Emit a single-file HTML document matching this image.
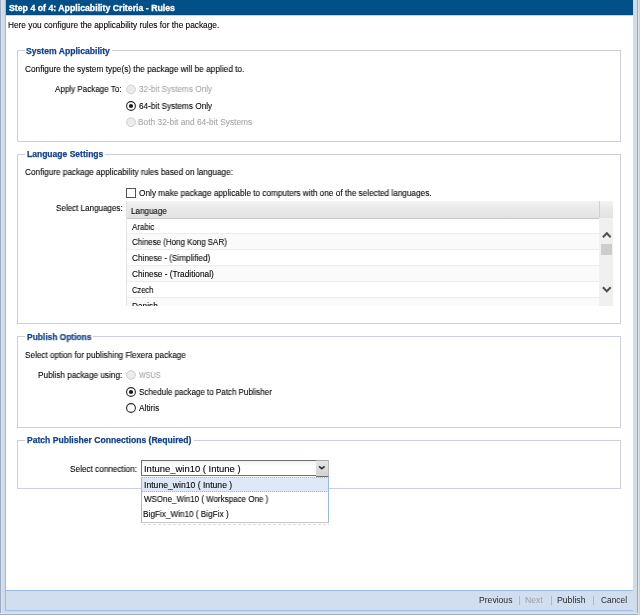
<!DOCTYPE html>
<html><head><meta charset="utf-8">
<style>
html,body{margin:0;padding:0;}
body{width:640px;height:615px;position:relative;overflow:hidden;background:#d0dcea;font-family:"Liberation Sans",sans-serif;color:#000;}
.a{position:absolute;}
.t,.lg,.btn{position:absolute;white-space:nowrap;line-height:10px;will-change:transform;-webkit-text-stroke:0.1px currentColor;}
.t{font-size:8.3px;}
.b{font-weight:bold;}
.lg{font-size:8.5px;font-weight:bold;color:#15428b;-webkit-text-stroke:0.25px #15428b;}
.lgbg{position:absolute;height:6px;background:#fff;}
.fs{position:absolute;border:1px solid #cdcfdb;}
.dis{color:#a8a8a8;}
.radio{position:absolute;width:9px;height:9px;border:1px solid #333;border-radius:50%;background:#fff;box-sizing:content-box;}
.radio.dis{border-color:#c8c8c8;background:#f0f0f0;}
.radio.on::after{content:"";position:absolute;left:2px;top:2px;width:5px;height:5px;border-radius:50%;background:#111;}
.row{position:absolute;left:0;width:473px;height:15px;border-bottom:1px solid #ededed;}
.row.alt{background:#fafafa;}
.btn{font-size:8.2px;color:#2a2a2a;-webkit-text-stroke:0;}
.sep{position:absolute;width:1px;height:9px;background:#c8b58e;top:596px;}
</style></head>
<body>
<div class="a" style="left:0;top:0;width:1px;height:615px;background:#9aabc3"></div>
<div class="a" style="left:1px;top:0;width:1px;height:615px;background:#dde4ee"></div>
<div class="a" style="left:5px;top:0;width:1px;height:611px;background:#99bbe8"></div>
<div class="a" style="left:637px;top:0;width:1px;height:615px;background:#9aabc3"></div>
<div class="a" style="left:638px;top:0;width:1px;height:615px;background:#e0e0e0"></div>
<div class="a" style="left:639px;top:0;width:1px;height:615px;background:#d2d2d2"></div>
<div class="a" style="left:0;top:613px;width:638px;height:1px;background:#dde4ee"></div>
<div class="a" style="left:0;top:614px;width:638px;height:1px;background:#9aabc3"></div>
<div class="a" style="left:6px;top:0;width:627px;height:590px;background:#fff"></div>
<div class="a" style="left:6px;top:0;width:627px;height:14px;background:#025087"></div>
<div class="a" style="left:6px;top:14px;width:627px;height:1px;background:#024a7f"></div>
<div class="a" style="left:6px;top:15px;width:627px;height:1px;background:#c4d6f0"></div>
<div class="t b" id="t1" style="left:9.00px;top:2.5px;font-size:8.75px;color:#fff;-webkit-text-stroke:0.3px #fff;transform:scaleX(1.0000);transform-origin:0 0;">Step 4 of 4: Applicability Criteria - Rules</div>
<div class="t" id="t2" style="left:8.00px;top:20px;transform:scaleX(1.0000);transform-origin:0 0;">Here you configure the applicability rules for the package.</div>
<div class="fs" style="left:17px;top:50px;width:602px;height:90px"></div>
<div class="lgbg" style="left:25px;top:48px;width:87px"></div>
<div class="lg" id="t3" style="left:26.00px;top:46px;transform:scaleX(1.0120);transform-origin:0 0;">System Applicability</div>
<div class="t" id="t4" style="left:25.00px;top:64px;transform:scaleX(0.9989);transform-origin:0 0;">Configure the system type(s) the package will be applied to.</div>
<div class="t" id="t5" style="left:55.00px;top:84px;transform:scaleX(0.9706);transform-origin:0 0;">Apply Package To:</div>
<svg class="a" style="left:125.10px;top:83px" width="12" height="12"><circle cx="6" cy="6.40" r="4.4" fill="#ececec" stroke="#cfcfcf" stroke-width="1"/></svg>
<div class="t dis" id="t6" style="left:139.00px;top:84px;transform:scaleX(0.9836);transform-origin:0 0;">32-bit Systems Only</div>
<svg class="a" style="left:125.10px;top:100px" width="12" height="12"><circle cx="6" cy="6.00" r="4.4" fill="#fff" stroke="#2a2a2a" stroke-width="1.1"/><circle cx="6" cy="6.00" r="2.1" fill="#1a1a1a"/></svg>
<div class="t" id="t7" style="left:139.00px;top:101px;transform:scaleX(0.9836);transform-origin:0 0;">64-bit Systems Only</div>
<svg class="a" style="left:125.10px;top:116px" width="12" height="12"><circle cx="6" cy="6.20" r="4.4" fill="#ececec" stroke="#cfcfcf" stroke-width="1"/></svg>
<div class="t dis" id="t8" style="left:137.98px;top:117px;transform:scaleX(1.0067);transform-origin:0 0;">Both 32-bit and 64-bit Systems</div>
<div class="fs" style="left:17px;top:154px;width:602px;height:168px"></div>
<div class="lgbg" style="left:25px;top:152px;width:80px"></div>
<div class="lg" id="t9" style="left:26.50px;top:149px;transform:scaleX(1.0034);transform-origin:0 0;">Language Settings</div>
<div class="t" id="t10" style="left:25.00px;top:167px;transform:scaleX(0.9881);transform-origin:0 0;">Configure package applicability rules based on language:</div>
<div class="a" style="left:126px;top:188px;width:8px;height:8px;border:1px solid #555;background:#fff"></div>
<div class="t" id="t11" style="left:139.00px;top:188px;transform:scaleX(0.9898);transform-origin:0 0;">Only make package applicable to computers with one of the selected languages.</div>
<div class="t" id="t12" style="left:56.00px;top:203px;transform:scaleX(0.9704);transform-origin:0 0;">Select Languages:</div>
<div class="a" style="left:126px;top:201px;width:487px;height:105px;overflow:hidden;background:#fff">
  <div class="a" style="left:0;top:0;width:1px;height:105px;background:#e4e4e4;z-index:2"></div>
  <div class="a" style="left:0;top:0;width:487px;height:17px;background:linear-gradient(#f6f6f6,#efefef 2px,#e2e2e2);border-bottom:1px solid #c6c6c6"></div>
  <div class="a" style="left:473px;top:0;width:1px;height:18px;background:#d0d0d0"></div>
<div class="t" id="t13" style="left:4.59px;top:5px;transform:scaleX(0.9722);transform-origin:0 0;">Language</div>
<div class="a" style="left:0;top:17px;width:487px;height:88px">
<div class="row" style="top:0px"><div class="t" id="t14" style="left:5.60px;top:4px;transform:scaleX(0.9577);transform-origin:0 0;">Arabic</div>
</div>
<div class="row alt" style="top:16px"><div class="t" id="t15" style="left:5.57px;top:3px;transform:scaleX(0.9552);transform-origin:0 0;">Chinese (Hong Kong SAR)</div>
</div>
<div class="row" style="top:32px"><div class="t" id="t16" style="left:5.57px;top:3px;transform:scaleX(0.9874);transform-origin:0 0;">Chinese - (Simplified)</div>
</div>
<div class="row alt" style="top:48px"><div class="t" id="t17" style="left:5.57px;top:3px;transform:scaleX(1.0002);transform-origin:0 0;">Chinese - (Traditional)</div>
</div>
<div class="row" style="top:64px"><div class="t" id="t18" style="left:5.60px;top:3px;transform:scaleX(0.9031);transform-origin:0 0;">Czech</div>
</div>
<div class="row alt" style="top:80px"><div class="t" id="t19" style="left:5.60px;top:3px;">Danish</div>
</div>
</div>
  <div class="a" style="left:473px;top:17px;width:14px;height:88px;background:#f0f0f0"></div>
  <svg class="a" style="left:473px;top:17px" width="14" height="88">
    <path d="M3.9 19.2 L7.8 15.2 L11.7 19.2" fill="none" stroke="#505050" stroke-width="2"/>
    <rect x="2" y="26" width="11" height="11" fill="#cdcdcd"/>
    <path d="M3.9 69.3 L7.8 73.3 L11.7 69.3" fill="none" stroke="#505050" stroke-width="2"/>
  </svg>
</div>
<div class="fs" style="left:17px;top:336px;width:602px;height:90px"></div>
<div class="lgbg" style="left:25px;top:334px;width:68px"></div>
<div class="lg" id="t20" style="left:26.50px;top:332px;transform:scaleX(0.9886);transform-origin:0 0;">Publish Options</div>
<div class="t" id="t21" style="left:25.00px;top:350px;transform:scaleX(0.9846);transform-origin:0 0;">Select option for publishing Flexera package</div>
<div class="t" id="t22" style="left:38.00px;top:370px;transform:scaleX(0.9881);transform-origin:0 0;">Publish package using:</div>
<svg class="a" style="left:125.10px;top:369px" width="12" height="12"><circle cx="6" cy="6.00" r="4.4" fill="#ececec" stroke="#cfcfcf" stroke-width="1"/></svg>
<div class="t dis" id="t23" style="left:139.00px;top:370px;transform:scaleX(0.8675);transform-origin:0 0;">WSUS</div>
<svg class="a" style="left:125.10px;top:386px" width="12" height="12"><circle cx="6" cy="6.00" r="4.4" fill="#fff" stroke="#2a2a2a" stroke-width="1.1"/><circle cx="6" cy="6.00" r="2.1" fill="#1a1a1a"/></svg>
<div class="t" id="t24" style="left:139.00px;top:387px;transform:scaleX(0.9636);transform-origin:0 0;">Schedule package to Patch Publisher</div>
<svg class="a" style="left:125.10px;top:402px" width="12" height="12"><circle cx="6" cy="6.00" r="4.4" fill="#fff" stroke="#2a2a2a" stroke-width="1.1"/></svg>
<div class="t" id="t25" style="left:139.00px;top:403px;transform:scaleX(0.9885);transform-origin:0 0;">Altiris</div>
<div class="fs" style="left:17px;top:440px;width:602px;height:47px"></div>
<div class="lgbg" style="left:25px;top:438px;width:169px"></div>
<div class="lg" id="t26" style="left:26.50px;top:435px;transform:scaleX(1.0092);transform-origin:0 0;">Patch Publisher Connections (Required)</div>
<div class="t" id="t27" style="left:70.47px;top:464px;transform:scaleX(0.9889);transform-origin:0 0;">Select connection:</div>
<div class="a" style="left:141px;top:460px;width:174px;height:14px;border:1px solid #6f6f6f;background:linear-gradient(#eef2f4,#fff 5px)"></div>
<div class="t" id="t28" style="left:143.85px;top:464px;font-size:8.8px;transform:scaleX(1.0740);transform-origin:0 0;">Intune_win10 ( Intune )</div>
<div class="a" style="left:316px;top:460px;width:12px;height:15px;border-top:1px solid #a8a8a8;border-right:1px solid #b8b8b8;border-bottom:1px solid #6f6f6f;background:linear-gradient(#e6e6e6,#d2d2d2)"></div>
<svg class="a" style="left:316px;top:460px" width="13" height="16"><path d="M3 6.3 L5.8 8.6 L8.6 6.3" fill="none" stroke="#333" stroke-width="1.7"/></svg>
<div class="a" style="left:141px;top:477px;width:188px;height:46px;background:#fff;border-left:1px solid #99bbe8;border-right:1px solid #99bbe8;border-bottom:1px solid #c8c8c8;box-sizing:border-box"></div>
<div class="a" style="left:143px;top:524px;width:186px;height:1px;background:repeating-linear-gradient(90deg,#ddd 0 3px,transparent 3px 5px)"></div>
<div class="a" style="left:141px;top:477px;width:188px;height:15px;background:#dfe8f6;border:1px dotted #a3bae9;border-left:1px solid #99bbe8;border-right:1px solid #99bbe8;box-sizing:border-box"></div>
<div class="t" id="t29" style="left:143.88px;top:480px;transform:scaleX(1.0393);transform-origin:0 0;">Intune_win10 ( Intune )</div>
<div class="t" id="t30" style="left:144.00px;top:494px;transform:scaleX(0.9632);transform-origin:0 0;">WSOne_Win10 ( Workspace One )</div>
<div class="t" id="t31" style="left:143.00px;top:509px;transform:scaleX(0.9882);transform-origin:0 0;">BigFix_Win10 ( BigFix )</div>
<div class="a" style="left:6px;top:590px;width:627px;height:1px;background:#99bbe8"></div>
<div class="a" style="left:6px;top:591px;width:627px;height:19px;background:#d0deef"></div>
<div class="a" style="left:6px;top:610px;width:627px;height:1px;background:#99bbe8"></div>
<div class="btn" id="t32" style="left:478.68px;top:596px;transform:scaleX(1.0500);transform-origin:0 0;">Previous</div>
<div class="sep" style="left:519px"></div>
<div class="btn" id="t33" style="left:525.49px;top:596px;color:#a0a0a0;transform:scaleX(1.0625);transform-origin:0 0;">Next</div>
<div class="sep" style="left:551px"></div>
<div class="btn" id="t34" style="left:557.33px;top:596px;transform:scaleX(1.0609);transform-origin:0 0;">Publish</div>
<div class="sep" style="left:593px"></div>
<div class="btn" id="t35" style="left:601.16px;top:596px;transform:scaleX(1.0208);transform-origin:0 0;">Cancel</div>
</body></html>
